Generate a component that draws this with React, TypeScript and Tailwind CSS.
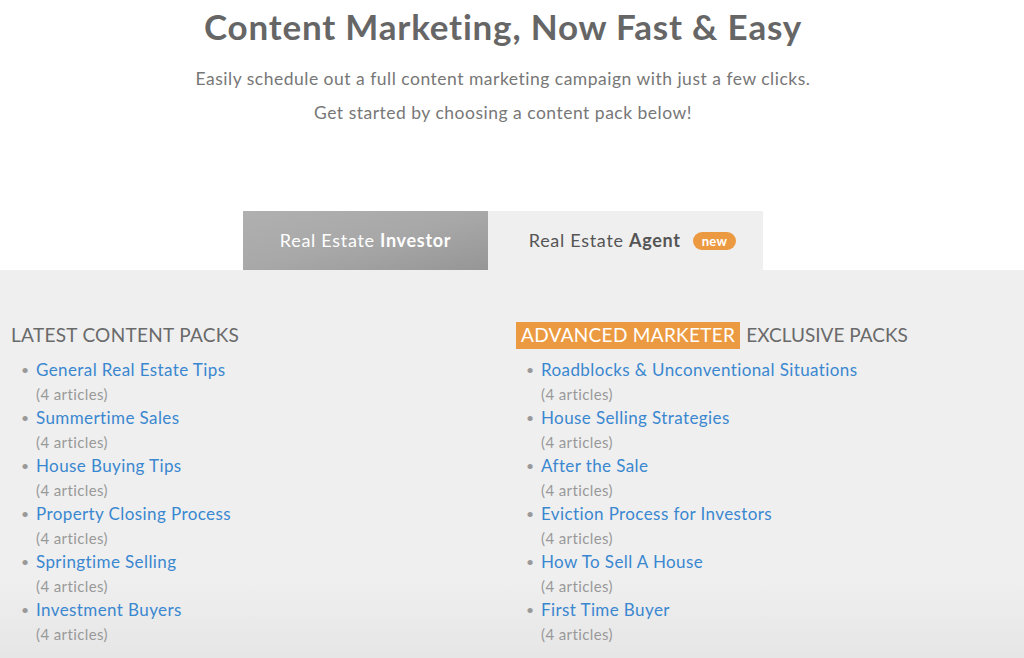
import { ReactNode } from "react";

const latest = [
  "General Real Estate Tips",
  "Summertime Sales",
  "House Buying Tips",
  "Property Closing Process",
  "Springtime Selling",
  "Investment Buyers",
];

const exclusive = [
  "Roadblocks & Unconventional Situations",
  "House Selling Strategies",
  "After the Sale",
  "Eviction Process for Investors",
  "How To Sell A House",
  "First Time Buyer",
];

function PackList({ items }: { items: string[] }) {
  return (
    <ul className="mt-[9px] pl-[10px]">
      {items.map((name) => (
        <li key={name} className="flex">
          <span className="w-[15px] text-[#999] text-[14px] leading-[24px]">•</span>
          <div>
            <a href="#" className="block text-[17px] leading-[24px] text-[#3a87d0] tracking-[0.4px]">
              {name}
            </a>
            <div className="text-[15px] leading-[24px] text-[#999] tracking-[0.4px]">(4 articles)</div>
          </div>
        </li>
      ))}
    </ul>
  );
}

function Heading({ children }: { children: ReactNode }) {
  return (
    <h2 className="flex items-center h-[27px] text-[19px] uppercase text-[#6a6a6a] tracking-[0.3px]">
      {children}
    </h2>
  );
}

export default function App() {
  return (
    <div className="min-h-screen bg-white font-['Lato',sans-serif]">
      <div className="text-center pr-[18px]">
        <h1 className="pt-[6px] text-[35px] leading-[40px] font-bold text-[#666] tracking-[0.8px]">
          Content Marketing, Now Fast &amp; Easy
        </h1>
        <p className="mt-[16px] text-[17.5px] leading-[34px] text-[#777] tracking-[0.5px]">
          Easily schedule out a full content marketing campaign with just a few clicks.
          <br />
          Get started by choosing a content pack below!
        </p>
      </div>

      <div className="mt-[81px] flex pl-[243px]">
        <button className="w-[245px] h-[59px] bg-gradient-to-br from-[#b0b0b0] via-[#a8a8a8] to-[#969696] text-white text-[18px] tracking-[0.7px]">
          Real Estate <span className="font-bold">Investor</span>
        </button>
        <button className="w-[275px] h-[59px] bg-[#efefef] text-[#555] text-[18px] tracking-[0.7px] flex items-center justify-center gap-[12px] pl-[14px]">
          <span>
            Real Estate <span className="font-bold">Agent</span>
          </span>
          <span className="bg-[#ec9a41] text-white text-[13px] font-bold rounded-full px-[9px] leading-[18px] tracking-[0.3px]">
            new
          </span>
        </button>
      </div>

      <div className="bg-gradient-to-b from-[#efefef] via-[#efefef] via-80% to-[#e6e6e6] pt-[52px] pb-[12px] pl-[11px] grid grid-cols-[505px_1fr]">
        <div>
          <Heading>Latest Content Packs</Heading>
          <PackList items={latest} />
        </div>
        <div>
          <Heading>
            <span className="bg-[#ec9a41] text-white h-full flex items-center px-[5px]">
              Advanced Marketer
            </span>
            <span className="ml-[6px] tracking-[0px]">Exclusive Packs</span>
          </Heading>
          <PackList items={exclusive} />
        </div>
      </div>
    </div>
  );
}
